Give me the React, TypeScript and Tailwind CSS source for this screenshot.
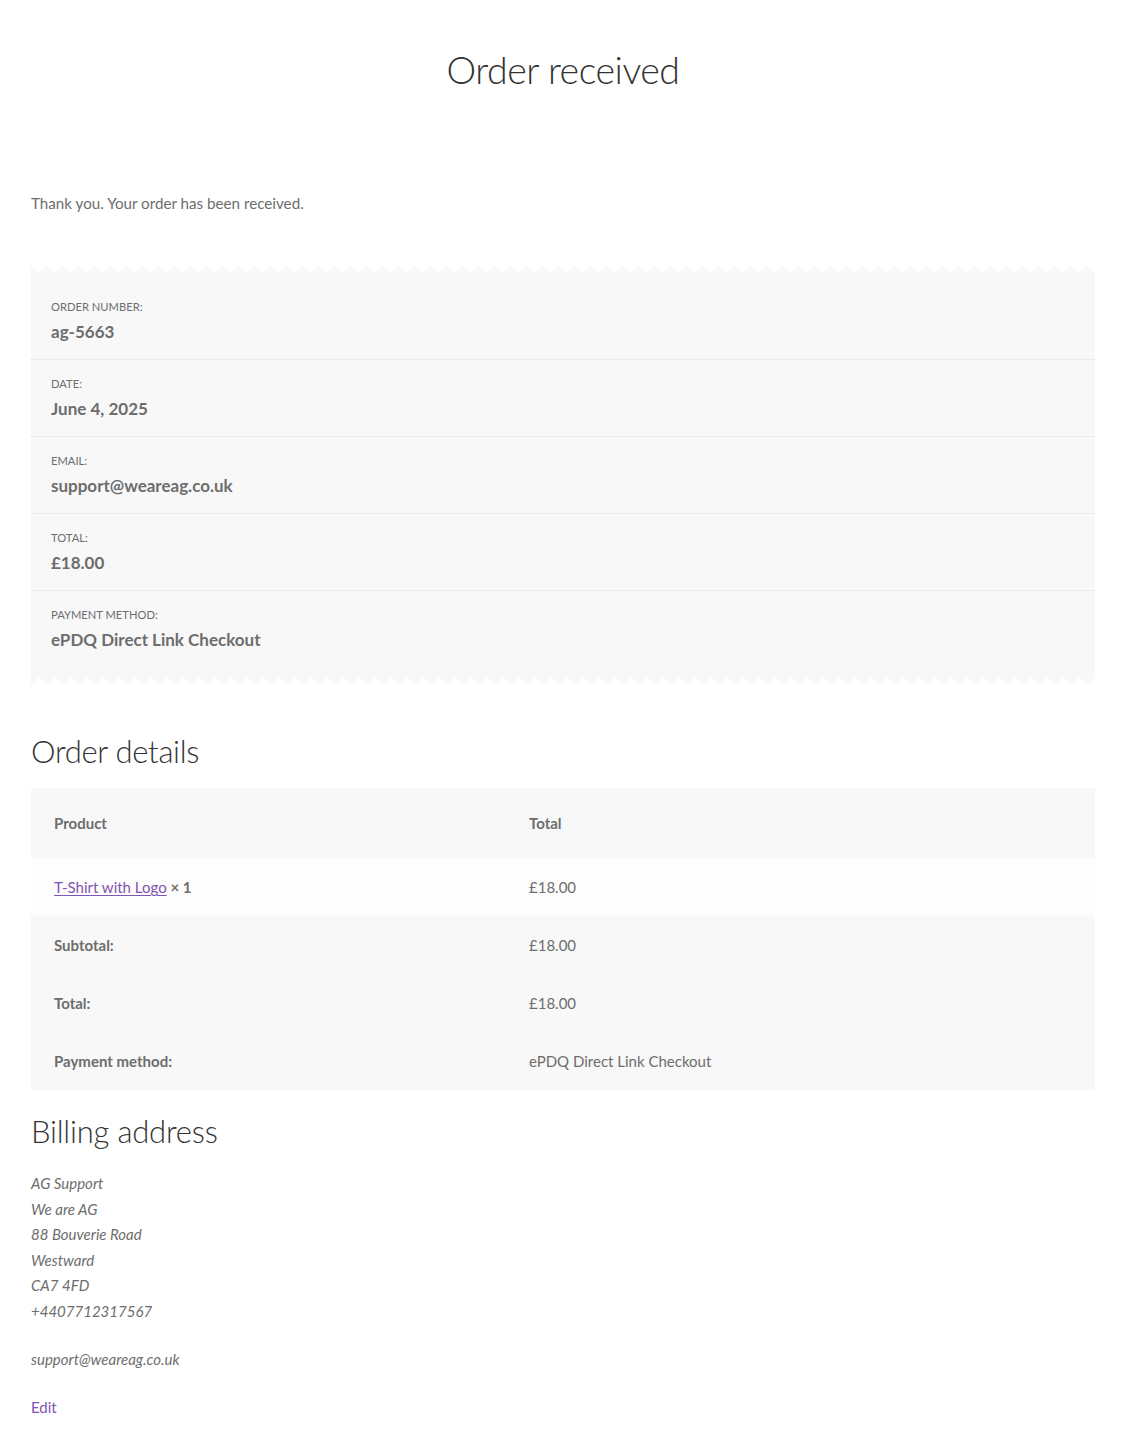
import React from "react";

const font = "font-['Lato','Noto_Sans',sans-serif]";

const overview = [
  { label: "Order number:", value: "ag-5663" },
  { label: "Date:", value: "June 4, 2025" },
  { label: "Email:", value: "support@weareag.co.uk" },
  { label: "Total:", value: "£18.00" },
  { label: "Payment method:", value: "ePDQ Direct Link Checkout" },
];

const Zigzag = ({ flip }: { flip?: boolean }) => (
  <svg className="block w-full h-[8px]" aria-hidden="true">
    <defs>
      <pattern
        id={flip ? "zz-bottom" : "zz-top"}
        width="16"
        height="8"
        patternUnits="userSpaceOnUse"
      >
        {flip ? (
          <polygon points="0,0 16,0 16,8 8,0 0,8" fill="#f8f8f8" />
        ) : (
          <polygon points="0,0 8,8 16,0 16,8 0,8" fill="#f8f8f8" />
        )}
      </pattern>
    </defs>
    <rect width="100%" height="8" fill={`url(#${flip ? "zz-bottom" : "zz-top"})`} />
  </svg>
);

const App = () => {
  return (
    <div className={`${font} bg-white text-[#6d6d6d] min-h-[1452px] px-[31px] pt-[45px] pb-10`}>
      <h1 className="text-center text-[37.5px] leading-[50px] font-light text-[#333333] tracking-[-0.5px]">
        Order received
      </h1>

      <p className="mt-[95px] text-[15.2px] leading-[26px]">
        Thank you. Your order has been received.
      </p>

      <div className="mt-[49px]">
        <Zigzag />
        <ul className="bg-[#f8f8f8] py-[10px]">
          {overview.map((item, i) => (
            <li
              key={item.label}
              className={`px-[20px] pt-[13px] pb-[13px] ${
                i < overview.length - 1 ? "border-b border-dotted border-[#dcdcdc]" : ""
              }`}
            >
              <div className="text-[11.2px] leading-[21px] uppercase">{item.label}</div>
              <div className="text-[17px] leading-[29px] font-bold">{item.value}</div>
            </li>
          ))}
        </ul>
        <Zigzag flip />
      </div>

      <h2 className="mt-[46px] text-[31px] leading-[40px] font-light text-[#333333] tracking-[-0.3px]">
        Order details
      </h2>

      <div className="mt-[17px] text-[15px] leading-[26px]">
        <div className="grid grid-cols-[475px_1fr] bg-[#f8f8f8] font-bold">
          <div className="px-[23px] py-[22px]">Product</div>
          <div className="px-[23px] py-[22px]">Total</div>
        </div>
        <div className="grid grid-cols-[475px_1fr] bg-[#fdfdfd]">
          <div className="px-[23px] py-4">
            <a href="#" className="text-[#7f54b3] underline underline-offset-2">
              T-Shirt with Logo
            </a>{" "}
            <strong className="font-bold">× 1</strong>
          </div>
          <div className="px-[23px] py-4">£18.00</div>
        </div>
        <div className="grid grid-cols-[475px_1fr] bg-[#f8f8f8]">
          <div className="px-[23px] py-4 font-bold">Subtotal:</div>
          <div className="px-[23px] py-4">£18.00</div>
          <div className="px-[23px] py-4 font-bold">Total:</div>
          <div className="px-[23px] py-4">£18.00</div>
          <div className="px-[23px] py-4 font-bold">Payment method:</div>
          <div className="px-[23px] py-4">ePDQ Direct Link Checkout</div>
        </div>
      </div>

      <h2 className="mt-[21px] text-[31px] leading-[40px] font-light text-[#333333] tracking-[-0.2px]">
        Billing address
      </h2>

      <address className="mt-[20px] text-[15px] leading-[25.6px] italic">
        AG Support
        <br />
        We are AG
        <br />
        88 Bouverie Road
        <br />
        Westward
        <br />
        CA7 4FD
        <p>+4407712317567</p>
        <p className="mt-[22px]">support@weareag.co.uk</p>
      </address>

      <a href="#" className="mt-[22px] block text-[15px] leading-[26px] text-[#7f54b3]">
        Edit
      </a>
    </div>
  );
};

export default App;
